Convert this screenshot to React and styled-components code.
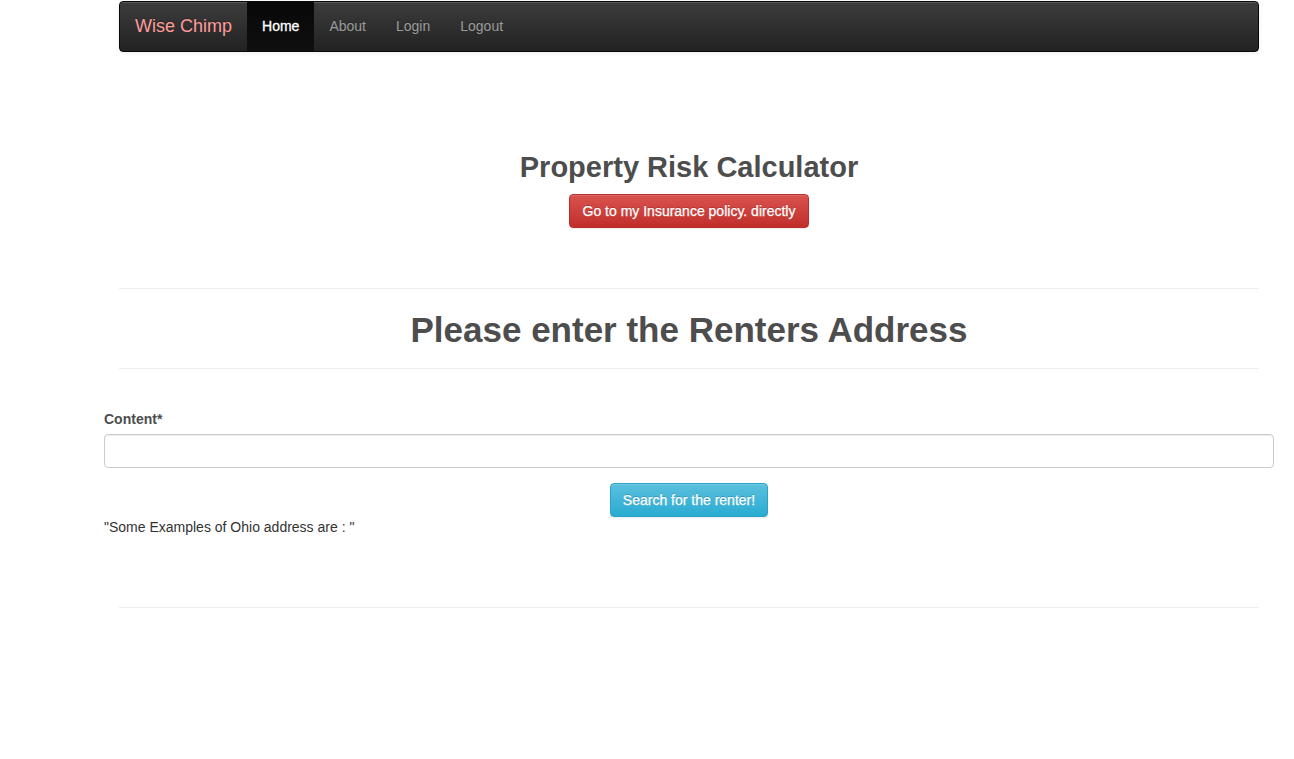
import styled, { createGlobalStyle } from "styled-components";

const GlobalStyle = createGlobalStyle`
  * { box-sizing: border-box; }
  body {
    margin: 0;
    background: #fff;
    font-family: "Liberation Sans", Arial, sans-serif;
    font-size: 14px;
    line-height: 1.42857;
    color: #333;
  }
`;

const Page = styled.div`
  width: 1170px;
  margin-left: 104px;
  padding-top: 1px;
`;

const Navbar = styled.nav`
  display: flex;
  align-items: stretch;
  height: 51px;
  margin: 0 15px;
  border: 1px solid #080808;
  border-radius: 4px;
  background-image: linear-gradient(to bottom, #3c3c3c 0, #222 100%);
  box-shadow: inset 0 1px 0 rgba(255, 255, 255, 0.15), 0 1px 5px rgba(0, 0, 0, 0.075);
  overflow: hidden;
`;

const Brand = styled.a`
  display: flex;
  align-items: center;
  padding: 0 15px;
  font-size: 18px;
  color: #ff9c9c;
  text-decoration: none;
  text-shadow: 0 -1px 0 rgba(0, 0, 0, 0.25);
`;

const NavLink = styled.a`
  display: flex;
  align-items: center;
  padding: 0 15px;
  font-size: 14px;
  text-decoration: none;
  color: ${(p) => (p.$active ? "#fff" : "#9d9d9d")};
  background-image: ${(p) =>
    p.$active ? "linear-gradient(to bottom, #080808 0, #0f0f0f 100%)" : "none"};
  text-shadow: 0 -1px 0 rgba(0, 0, 0, 0.25);
  -webkit-text-stroke: ${(p) => (p.$active ? "0.3px #fff" : "0")};
`;

const Hero = styled.section`
  display: flex;
  flex-direction: column;
  align-items: center;
  padding: 99px 15px 60px;
`;

const Title = styled.h2`
  margin: 0;
  font-size: 29px;
  font-weight: bold;
  line-height: 33px;
  color: #4d4d4d;
`;

const Button = styled.a`
  display: inline-block;
  height: 34px;
  padding: 0 ${(p) => (p.$variant === "info" ? 12 : 13)}px;
  font-family: inherit;
  font-size: 14px;
  line-height: 32px;
  color: #fff;
  text-decoration: none;
  border-radius: 4px;
  border: 1px solid ${(p) => (p.$variant === "info" ? "#28a4c9" : "#b92c28")};
  background-image: ${(p) =>
    p.$variant === "info"
      ? "linear-gradient(to bottom, #5bc0de 0, #2aabd2 100%)"
      : "linear-gradient(to bottom, #d9534f 0, #c12e2a 100%)"};
  text-shadow: 0 -1px 0 rgba(0, 0, 0, 0.2);
  -webkit-text-stroke: 0.25px #fff;
  box-shadow: inset 0 1px 0 rgba(255, 255, 255, 0.15), 0 1px 1px rgba(0, 0, 0, 0.075);
  margin-top: ${(p) => p.$top || 0}px;
`;

const Rule = styled.hr`
  margin: 0 15px;
  border: 0;
  border-top: 1px solid #eee;
`;

const PageHeader = styled.h1`
  margin: 0;
  padding: 21px 15px 18px;
  text-align: center;
  font-size: 35px;
  font-weight: bold;
  line-height: 40px;
  color: #4d4d4d;
`;

const Form = styled.form`
  display: flex;
  flex-direction: column;
  padding-top: 40px;
`;

const Label = styled.label`
  font-weight: bold;
  color: #4d4d4d;
  line-height: 20px;
  margin-bottom: 5px;
`;

const Input = styled.input`
  width: 100%;
  height: 34px;
  padding: 6px 12px;
  font-size: 14px;
  font-family: inherit;
  border: 1px solid #ccc;
  border-radius: 4px;
  box-shadow: inset 0 1px 1px rgba(0, 0, 0, 0.075);
`;

const Actions = styled.div`
  display: flex;
  justify-content: center;
  margin-top: 15px;
`;

const Examples = styled.p`
  margin: 0 0 70px;
  line-height: 20px;
  color: #333;
`;

export default function App() {
  return (
    <>
      <GlobalStyle />
      <Page>
        <Navbar>
          <Brand href="#">Wise Chimp</Brand>
          <NavLink href="#" $active>Home</NavLink>
          <NavLink href="#">About</NavLink>
          <NavLink href="#">Login</NavLink>
          <NavLink href="#">Logout</NavLink>
        </Navbar>

        <Hero>
          <Title>Property Risk Calculator</Title>
          <Button href="#" $top={10}>Go to my Insurance policy. directly</Button>
        </Hero>

        <Rule />
        <PageHeader>Please enter the Renters Address</PageHeader>
        <Rule />

        <Form onSubmit={(e) => e.preventDefault()}>
          <Label htmlFor="content">Content*</Label>
          <Input id="content" type="text" />
          <Actions>
            <Button as="button" type="submit" $variant="info">
              Search for the renter!
            </Button>
          </Actions>
          <Examples>"Some Examples of Ohio address are : "</Examples>
        </Form>
        <Rule />
      </Page>
    </>
  );
}
